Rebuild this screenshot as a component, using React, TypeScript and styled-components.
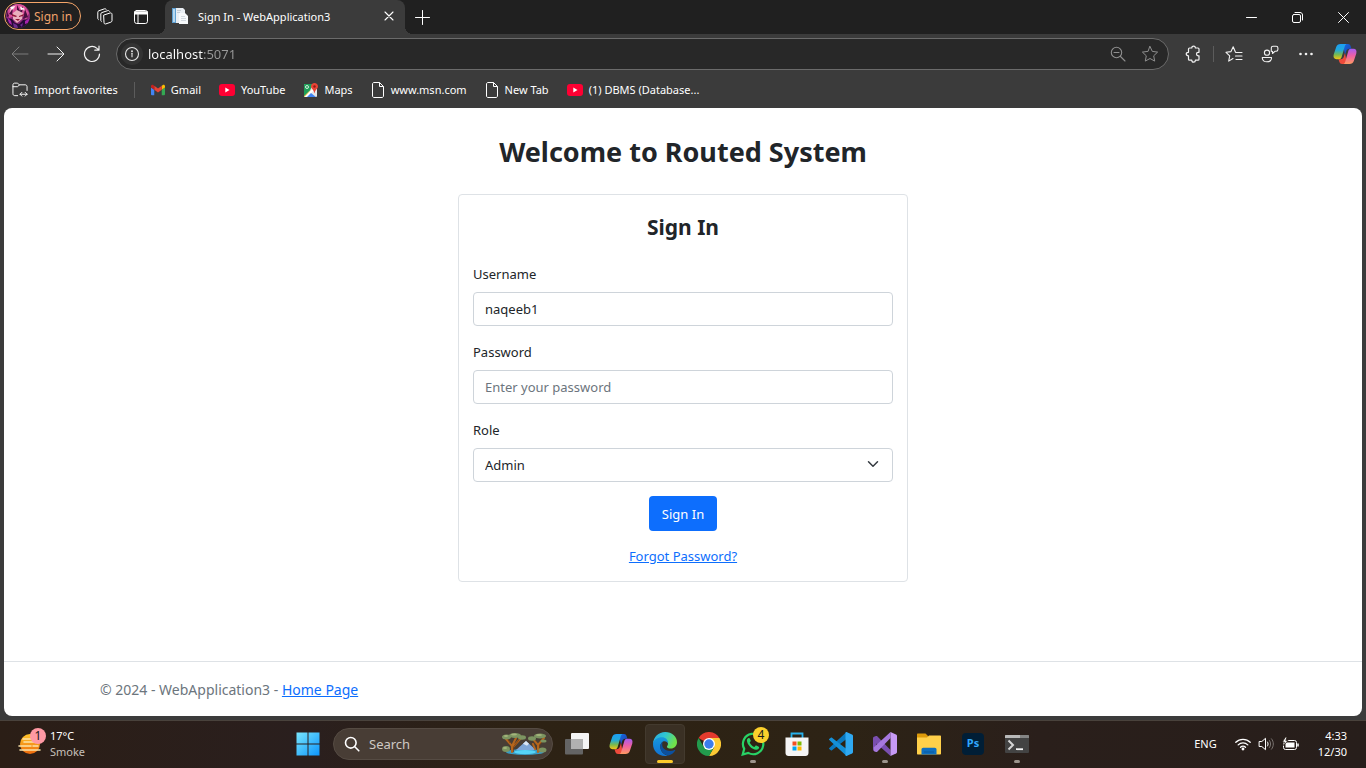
import React, { useId, useState } from "react";
import styled, { createGlobalStyle, css } from "styled-components";

const GlobalStyle = createGlobalStyle`
  *, *::before, *::after { box-sizing: border-box; }
  body { margin: 0; background: #3b3b3b; font-family: "Noto Sans", "Open Sans", sans-serif; }
  button, input, select { font-family: inherit; }
  svg { display: block; flex: none; }
`;

const Desktop = styled.div`
  display: flex;
  flex-direction: column;
  min-height: 100vh;
  background: #3b3b3b;
`;

/* ---------- Browser chrome ---------- */

const TitleBar = styled.header`
  display: flex;
  align-items: center;
  height: 34px;
  background: #202020;
  color: #fff;
`;

const PlainButton = styled.button<{ $w?: number; $h?: number; $dim?: boolean }>`
  display: flex;
  align-items: center;
  justify-content: center;
  flex: none;
  width: ${(p) => p.$w ?? 36}px;
  height: ${(p) => p.$h ?? 32}px;
  padding: 0;
  border: 0;
  background: none;
  color: ${(p) => (p.$dim ? "#7d7d7d" : "inherit")};
`;

const ProfileButton = styled.button`
  display: flex;
  align-items: center;
  gap: 4px;
  flex: none;
  width: 77px;
  height: 28px;
  margin: 0 6px 2px 4px;
  padding: 0 0 0 1px;
  border: 1px solid #f5a569;
  border-radius: 14px;
  background: none;
  color: #f0a26b;
  font-size: 12px;
  white-space: nowrap;
`;

const Tab = styled.div`
  position: relative;
  display: flex;
  align-items: center;
  width: 240px;
  height: 34px;
  margin-left: 6px;
  padding: 0 6px 2px 7px;
  border-radius: 8px 8px 0 0;
  background: #3b3b3b;
  font-size: 11px;

  &::before, &::after {
    content: "";
    position: absolute;
    bottom: 0;
    width: 8px;
    height: 8px;
  }
  &::before {
    right: 100%;
    background: radial-gradient(circle at 0 0, #202020 8px, #3b3b3b 8px);
  }
  &::after {
    left: 100%;
    background: radial-gradient(circle at 100% 0, #202020 8px, #3b3b3b 8px);
  }
`;

const TabTitle = styled.span`
  flex: 1;
  margin-left: 10px;
  white-space: nowrap;
`;

const WindowControls = styled.div`
  display: flex;
  margin-left: auto;
`;

const Toolbar = styled.div`
  display: flex;
  align-items: center;
  height: 40px;
  padding: 0 1px 0 2px;
  color: #f2f2f2;
`;

const AddressBar = styled.label`
  display: flex;
  align-items: center;
  flex: 1;
  height: 32px;
  margin: 0 6px;
  padding: 0 2px 0 4px;
  border: 1px solid #6b6b6b;
  border-radius: 16px;
  background: #282828;
  color: #8f8f8f;
`;

const SiteInfo = styled.span`
  display: flex;
  align-items: center;
  justify-content: center;
  width: 22px;
  height: 22px;
  border-radius: 11px;
  background: #333;
  color: #e8e8e8;
`;

const AddressInput = styled.input`
  flex: 1;
  min-width: 0;
  margin-left: 5px;
  padding: 0;
  border: 0;
  outline: 0;
  background: linear-gradient(90deg, #fff 56px, #9a9a9a 56px);
  background-clip: text;
  -webkit-background-clip: text;
  color: transparent;
  font-size: 13px;
  line-height: 20px;
`;

const Divider = styled.span<{ $gap: number }>`
  flex: none;
  width: 1px;
  height: 16px;
  margin: 0 ${(p) => p.$gap}px;
  background: #5c5c5c;
`;

const Bookmarks = styled.nav`
  display: flex;
  align-items: center;
  gap: 18px;
  height: 34px;
  padding: 0 12px 2px;
`;

const Bookmark = styled.a`
  display: flex;
  align-items: center;
  gap: 6px;
  color: #fff;
  font-size: 11px;
  line-height: 16px;
  text-decoration: none;
  white-space: nowrap;
`;

/* ---------- Web page ---------- */

const Page = styled.div`
  display: flex;
  flex: 1;
  flex-direction: column;
  margin: 0 4px 4px;
  border-radius: 8px;
  background: #fff;
  color: #212529;
  font-size: 13px;
  line-height: 22px;
`;

const Main = styled.main`
  display: flex;
  flex: 1;
  flex-direction: column;
  align-items: center;
  padding: 27px 14px;
`;

const Heading = styled.h1`
  margin: 0 0 25px;
  font-size: 27px;
  line-height: 34px;
  font-weight: 700;
`;

const Card = styled.form`
  display: flex;
  flex-direction: column;
  align-items: center;
  width: 100%;
  max-width: 450px;
  padding: 18px 14px 14px;
  border: 1px solid #dee2e6;
  border-radius: 4px;
`;

const CardTitle = styled.h2`
  margin: 0 0 22px;
  font-size: 21px;
  line-height: 28px;
  font-weight: 700;
`;

const Field = styled.div`
  display: flex;
  flex-direction: column;
  gap: 7px;
  width: 100%;
  margin-bottom: 15px;

  &:last-of-type { margin-bottom: 14px; }
`;

const control = css`
  width: 100%;
  height: 34px;
  padding: 0 11px;
  border: 1px solid #ced4da;
  border-radius: 4px;
  background: #fff;
  color: #212529;
  font-size: 13px;
  line-height: 22px;
`;

const TextInput = styled.input`
  ${control}
  &::placeholder { color: #6c757d; opacity: 1; }
`;

const SelectWrap = styled.div`
  position: relative;
  svg {
    position: absolute;
    top: 10px;
    right: 14px;
    pointer-events: none;
  }
`;

const RoleSelect = styled.select`
  ${control}
  appearance: none;
`;

const SubmitButton = styled.button`
  height: 35px;
  padding: 0 13px;
  border: 0;
  border-radius: 4px;
  background: #0d6efd;
  color: #fff;
  font-size: 13px;
`;

const PageLink = styled.a`
  color: #0d6efd;
  text-decoration: underline;
`;

const ForgotRow = styled.p`
  margin: 14px 0 0;
`;

const Footer = styled.footer`
  border-top: 1px solid #dee2e6;
  color: #6c757d;
  font-size: 14px;
`;

const FooterInner = styled.div`
  max-width: 1188px;
  margin: 0 auto;
  padding: 17px 11px 15px;
`;

/* ---------- Taskbar ---------- */

const Taskbar = styled.footer`
  display: flex;
  align-items: center;
  height: 48px;
  padding-bottom: 2px;
  border-top: 1px solid #49423c;
  background: linear-gradient(90deg, #2b1e16, #2a1f1e 22%, #2d2214 38%, #2d2315 62%, #2a1f1b 76%, #271e1b);
  color: #fff;
  font-size: 11px;
  line-height: 16px;
`;

const TaskLeft = styled.div`
  display: flex;
  align-items: center;
  flex: 1 1 285px;
  padding-left: 18px;
`;

const WeatherIcon = styled.span`
  position: relative;
  margin-right: 8px;
`;

const Badge = styled.span<{ $bg: string }>`
  position: absolute;
  top: -5px;
  right: -4px;
  width: 16px;
  height: 16px;
  border-radius: 8px;
  background: ${(p) => p.$bg};
  color: #1a1a1a;
  font-size: 12px;
  line-height: 16px;
  text-align: center;
`;

const Stack = styled.div<{ $right?: boolean }>`
  display: flex;
  flex-direction: column;
  text-align: ${(p) => (p.$right ? "right" : "left")};
`;

const Muted = styled.span`
  color: #c6c0bb;
`;

const TaskCenter = styled.div`
  display: flex;
  align-items: center;
  flex: none;
`;

const SearchBox = styled.label`
  display: flex;
  align-items: center;
  width: 220px;
  height: 32px;
  margin: 0 2px 0 3px;
  padding: 0 5px 0 10px;
  border: 1px solid #554b43;
  border-radius: 16px;
  background: #483d35;
`;

const SearchInput = styled.input`
  flex: 1;
  min-width: 0;
  margin-left: 9px;
  padding: 0;
  border: 0;
  outline: 0;
  background: none;
  color: #fff;
  font-size: 13px;
  &::placeholder { color: #cfc9c4; opacity: 1; }
`;

const AppButton = styled.button<{ $active?: boolean }>`
  position: relative;
  display: flex;
  align-items: center;
  justify-content: center;
  width: 40px;
  height: 40px;
  margin: 0 2px;
  padding: 0;
  border: 1px solid ${(p) => (p.$active ? "#433a2e" : "transparent")};
  border-radius: 4px;
  background: ${(p) => (p.$active ? "#3a3024" : "none")};
`;

const IconHolder = styled.span`
  position: relative;
`;

const Running = styled.span<{ $active?: boolean }>`
  position: absolute;
  bottom: 0;
  left: 50%;
  width: ${(p) => (p.$active ? 16 : 6)}px;
  height: 3px;
  border-radius: 2px;
  background: ${(p) => (p.$active ? "#fccb2b" : "#9c958d")};
  transform: translateX(-50%);
`;

const Tray = styled.div`
  display: flex;
  align-items: center;
  justify-content: flex-end;
  flex: 1 1 326px;
  padding-right: 19px;
`;

const TrayIcons = styled.div`
  display: flex;
  align-items: center;
  gap: 7px;
  margin: 0 19px 0 18px;
`;

const PhotoshopTile = styled.span`
  display: block;
  width: 22px;
  height: 22px;
  border-radius: 4px;
  background: #001e36;
  color: #31a8ff;
  font-size: 11px;
  font-weight: 700;
  line-height: 20px;
  text-align: center;
`;

/* ---------- Icons ---------- */

const Line = ({ size = 16, w = 1, children }: { size?: number; w?: number; children: React.ReactNode }) => (
  <svg width={size} height={size} viewBox={`0 0 ${size} ${size}`} fill="none" stroke="currentColor" strokeWidth={w} strokeLinecap="round" strokeLinejoin="round" aria-hidden="true">
    {children}
  </svg>
);

const Avatar = () => (
  <svg width="24" height="24" viewBox="0 0 24 24" aria-hidden="true">
    <defs><clipPath id="avatarClip"><circle cx="12" cy="12" r="12" /></clipPath></defs>
    <g clipPath="url(#avatarClip)">
      <path fill="#8c2a78" d="M0 0h24v24H0z" />
      <path fill="#d9509a" d="M2 6l6-6h10l5 9-3 7-6-8-5 4-6 2z" />
      <path fill="#f3a3c6" d="M4 5l6-4-2 4-4 4zM13 2l4 1 4 6-4-3z" />
      <path fill="#4a0f40" d="M3 10l4-6-1 7zM11 1l3 6 3-5-1 7-5-2zM19 5l3 8-5 2zM1 8l2 4-2 1z" />
      <path fill="#e9b0bf" d="M7 9l4-3 6 3-1 6-5 4-4-4z" />
      <path fill="#fff" d="M4 3l5-1-3 4zM14 3l5 2-4 1z" />
      <path fill="#8f1738" d="M6 10l5 2-1 1-4-1zM13 12l5-2-1 2-4 1zM9 15h5l-2 2z" />
      <path fill="#260b36" d="M0 14l6 1 3 4 4 1 4-4 7-1v9H0z" />
      <path fill="#a824ad" d="M1 13l4 4 1 4-3-2zM19 17l5-3-2 5-3 1z" />
      <path fill="#6d2b8e" d="M7 19l4 2 1 3H8zM14 21l3-2-1 4z" />
    </g>
  </svg>
);

const WorkspacesIcon = () => (
  <Line size={18}>
    <path d="M8 6.500l6-2c1-.3 2 .2 2 1.300v6.400c0 .7-.5 1.300-1.200 1.500l-5 1.700c-1 .4-1.800-.2-1.800-1.200z" transform="translate(0 .5)" />
    <path d="M5.300 13.500c-.3-.2-.5-.5-.5-1V6c0-.7.400-1.200 1-1.400l6-2c.7-.2 1.400 0 1.700.6" />
    <path d="M2.300 11.500c-.3-.2-.5-.5-.5-1V4.200c0-.7.400-1.200 1-1.400l5.700-2c.7-.2 1.400 0 1.700.6" />
  </Line>
);

const TabActionsIcon = () => (
  <Line size={16}>
    <rect x="1.500" y="1.500" width="13" height="13" rx="2.200" />
    <path d="M2 3.200h12M2 4.500h12" strokeWidth="2" />
    <path d="M5 5v9" />
  </Line>
);

const DocFavicon = () => (
  <svg width="16" height="16" viewBox="0 0 16 16" aria-hidden="true">
    <path fill="#5e9fd0" d="M0 0h4v15H0z" />
    <path fill="#b7d7ee" d="M1 1h2v13H1z" />
    <path fill="#e9eef3" d="M4 0h7l2 2v13H4z" />
    <path fill="#c4ccd4" d="M5 2h4v1H5zM5 4h3v1H5z" />
    <path fill="#f7f9fb" d="M7 5h6l3 3v8H7z" />
    <path fill="#d3dae1" d="M9 8h4v1H9zM9 10h5v1H9zM9 12h5v1H9z" />
  </svg>
);

const BackIcon = () => <Line size={18}><path d="M17 9H1.500M8 2L1 9l7 7" /></Line>;
const ForwardIcon = () => <Line size={18}><path d="M1 9h15.500M10 2l7 7-7 7" /></Line>;
const ReloadIcon = () => <Line size={18} w={1.2}><path d="M16.500 9a7.500 7.500 0 1 1-2.500-5.600L16 5M16 1v4.200h-4.200" /></Line>;
const InfoIcon = () => <Line size={16} w={1.1}><circle cx="8" cy="8" r="6.500" /><path d="M8 7.300v3.500" /><circle cx="8" cy="5.200" r=".4" fill="currentColor" /></Line>;
const ZoomOutIcon = () => <Line size={16} w={1.1}><circle cx="6.500" cy="6.500" r="5.200" /><path d="M4 6.500h5M10.500 10.500l4.500 4.500" /></Line>;

const starPath = "M9 1.500l2.300 4.900 5.300.7-3.900 3.700 1 5.300L9 13.500l-4.700 2.600 1-5.300L1.400 7.100l5.300-.7z";
const StarIcon = () => <Line size={18}><path d={starPath} /></Line>;
const FavoritesIcon = () => (
  <Line size={18} w={1.1}>
    <path d="M10.500 7.200L8.200 1.800 6 6.600l-5 .7 3.700 3.500-1 5.300 4.300-2.600M11 7.500h6M10.500 11h6.500M11 14.500h6" />
  </Line>
);
const PuzzleIcon = () => (
  <Line size={18} w={1.2}>
    <path d="M4.500 4c0-.6.400-1 1-1h2.300c0-2.600 3.600-2.600 3.600 0H14c.6 0 1 .4 1 1v3.300h-.8c-2.300 0-2.300 3.500 0 3.500h.8v3.400c0 .6-.4 1-1 1h-2.600c0 2.600-3.600 2.600-3.600 0H5.500c-.6 0-1-.4-1-1v-3.400c-3 0-3-3.500 0-3.500z" />
  </Line>
);
const FeedbackIcon = () => (
  <Line size={18} w={1.1}>
    <circle cx="6" cy="7.700" r="2.600" />
    <path d="M1.300 12.500h9.200v.6c0 2.300-2 3.700-4.600 3.700s-4.600-1.400-4.600-3.700zM10.300 6.500V3c0-1 .7-1.700 1.700-1.700h3.200c1 0 1.700.7 1.700 1.700v1.500c0 1-.7 1.700-1.700 1.700h-1l-2.700 2.300v-2.300" />
  </Line>
);
const DotsIcon = () => (
  <svg width="16" height="16" viewBox="0 0 16 16" fill="currentColor" aria-hidden="true">
    <circle cx="2.500" cy="8" r="1.300" /><circle cx="8" cy="8" r="1.300" /><circle cx="13.500" cy="8" r="1.300" />
  </svg>
);

const CopilotIcon = () => {
  const id = useId();
  return (
    <svg width="24" height="24" viewBox="0 0 24 24" aria-hidden="true">
      <defs>
        <linearGradient id={id + "a"} x1="0" y1="0" x2="0" y2="1">
          <stop offset="0" stopColor="#1c9ef5" /><stop offset=".4" stopColor="#22a9d8" /><stop offset=".7" stopColor="#79b94f" /><stop offset="1" stopColor="#f4c413" />
        </linearGradient>
        <linearGradient id={id + "b"} x1="0" y1="0" x2="0" y2="1">
          <stop offset="0" stopColor="#a65cf0" /><stop offset=".45" stopColor="#ec5fa5" /><stop offset="1" stopColor="#ff9a62" />
        </linearGradient>
        <linearGradient id={id + "c"} x1="0" y1="0" x2="1" y2="1">
          <stop offset="0" stopColor="#1769e0" /><stop offset="1" stopColor="#1b3fae" />
        </linearGradient>
      </defs>
      <path fill={`url(#${id}c)`} d="M10 2h5c1.400 0 2.200.8 2.600 2l.8 2.800h-2.200c-1.600 0-2.600 1-3 2.400L12 13z" />
      <path fill="#ee4a3b" d="M14 22H9c-1.400 0-2.200-.8-2.600-2l-.9-2.800h2.300c1.600 0 2.600-1 3-2.400L12 11z" />
      <path fill={`url(#${id}a)`} d="M7.600 2h6.200c-1.200.3-1.700 1.300-2 2.300L8.600 15.200c-.4 1.300-1.200 2-2.600 2H3.600C1 17.200 0 15.200.7 12.600L3.200 5C3.800 3 5.300 2 7.600 2z" />
      <path fill={`url(#${id}b)`} d="M16.400 22h-6.200c1.200-.3 1.700-1.300 2-2.300l3.200-10.900c.4-1.300 1.200-2 2.600-2h2.400c2.600 0 3.600 2 2.900 4.600L20.800 19c-.6 2-2.100 3-4.400 3z" />
    </svg>
  );
};

const ImportIcon = () => (
  <svg width="16" height="16" viewBox="0 0 17 17" fill="none" stroke="#fff" strokeLinecap="round" strokeLinejoin="round" aria-hidden="true">
    <path d="M6 14.500H3c-1.200 0-2-.8-2-2V3c0-1 .8-1.800 1.800-1.800h2.400c.5 0 1 .2 1.300.6L7.800 3H14c1.200 0 2 .8 2 2v4M1 5h4.500c.5 0 1-.2 1.300-.6L7.800 3M10.500 11L8.500 13l2 2M14 11l2 2-2 2M8.700 13H16" />
  </svg>
);
const GmailIcon = () => (
  <svg width="14" height="12" viewBox="0 0 15 12" aria-hidden="true">
    <path fill="#4285f4" d="M1 11.500h2.500V5.800L0 3.200v7.300c0 .6.400 1 1 1z" />
    <path fill="#34a853" d="M11.500 11.500H14c.6 0 1-.4 1-1V3.200l-3.500 2.600z" />
    <path fill="#fbbc04" d="M11.500 1.500v4.300L15 3.200V2c0-1.500-1.600-2-2.600-1.200z" />
    <path fill="#ea4335" d="M3.500 5.800V1.500l4 3 4-3v4.300l-4 3z" />
    <path fill="#c5221f" d="M0 2v1.200l3.500 2.600V1.500l-.9-.7C1.600 0 0 .5 0 2z" />
  </svg>
);
const YouTubeIcon = () => (
  <svg width="16" height="12" viewBox="0 0 16 12" aria-hidden="true">
    <rect width="16" height="12" rx="3" fill="#f03" /><path d="M6.300 3.500v5l4.200-2.500z" fill="#fff" />
  </svg>
);
const MapsIcon = () => (
  <svg width="15" height="15" viewBox="0 0 15 15" aria-hidden="true">
    <rect x="1" y="1" width="13" height="13" rx="1" fill="#e6e8ea" />
    <path fill="#1e9e58" d="M1 2c0-.6.400-1 1-1h8L7 7.500 1 13.500z" />
    <path fill="#fcc934" d="M8.500 6L1 13.300 2 14z" /><path fill="#fff" d="M10 5.500L1.500 14h2.800l6.500-6.600z" />
    <path fill="#4285f4" d="M4 14l4-4 5 4z" />
    <circle cx="4" cy="4" r="1.500" fill="none" stroke="#fff" strokeWidth=".8" />
    <path fill="#ea4335" d="M11.500 0C9.600 0 8 1.500 8 3.500c0 2.200 2.700 3 3.300 6.500.1.300.3.300.4 0C12.300 6.500 15 5.700 15 3.500 15 1.500 13.400 0 11.500 0z" />
    <circle cx="11.500" cy="3.500" r="1.200" fill="#8c1f1a" />
  </svg>
);
const FileIcon = () => (
  <svg width="14" height="16" viewBox="0 0 14 16" fill="none" stroke="#fff" strokeLinejoin="round" aria-hidden="true">
    <path d="M3 .5h5.500l4 4v9.500c0 .8-.7 1.500-1.500 1.500H3c-.8 0-1.500-.7-1.500-1.500V2C1.500 1.200 2.200.5 3 .5zM8.500.5v4h4" />
  </svg>
);

const SmokeIcon = () => (
  <svg width="24" height="22" viewBox="0 0 24 22" aria-hidden="true">
    <defs><linearGradient id="sun" x1="0" y1="0" x2="0" y2="1"><stop offset="0" stopColor="#ffc62a" /><stop offset="1" stopColor="#ee6a0c" /></linearGradient></defs>
    <circle cx="12" cy="11" r="10" fill="url(#sun)" />
    <path d="M5 6h9M6 9h17M1 13h12M15 13h5M2 17h20" stroke="#fbe2a8" strokeWidth="1.600" strokeLinecap="round" />
  </svg>
);
const StartIcon = () => (
  <svg width="24" height="24" viewBox="0 0 24 24" aria-hidden="true">
    <defs><linearGradient id="start" x1="0" y1="0" x2="24" y2="24" gradientUnits="userSpaceOnUse"><stop offset="0" stopColor="#7be8fd" /><stop offset="1" stopColor="#0a93fb" /></linearGradient></defs>
    <path fill="url(#start)" d="M.5.500h11v11H.5zM12.500.5h11v11h-11zM.5 12.500h11v11H.5zM12.500 12.500h11v11h-11z" />
  </svg>
);
const SearchArt = () => (
  <svg width="46" height="24" viewBox="0 0 46 24" aria-hidden="true">
    <ellipse cx="24" cy="20" rx="19" ry="3" fill="#3a9cc4" />
    <path fill="#7fa6d8" d="M15 18l10-9 10 9z" /><path fill="#dbe6f5" d="M22 11.700L25 9l3 2.700-2 2-2-1z" />
    <path fill="none" stroke="#b5651d" strokeWidth="2" strokeLinecap="round" d="M11 20v-6L5 7M11 14l4-8M12 15l8-9M37 20v-7l-5-6M37 13l6-7M34 17l-2-5" />
    <path fill="none" stroke="#7d3f10" strokeWidth=".8" d="M12.500 20v-5l6-8M38.500 20v-7l4-5M9 11L7 7" />
    <g fill="#7c9461"><ellipse cx="5.500" cy="5" rx="4.500" ry="2.500" /><ellipse cx="14" cy="3.500" rx="6" ry="2.500" /><ellipse cx="21" cy="5.500" rx="4" ry="2.200" /><ellipse cx="31" cy="6.500" rx="4" ry="2.200" /><ellipse cx="39" cy="4" rx="6" ry="2.500" /><ellipse cx="42.500" cy="9" rx="3" ry="1.600" /><ellipse cx="5" cy="17" rx="4" ry="3" /><ellipse cx="41.500" cy="18" rx="4" ry="2.500" /></g>
    <g fill="#a5b57c"><ellipse cx="13" cy="2.500" rx="3" ry="1" /><ellipse cx="38" cy="3" rx="3" ry="1" /><ellipse cx="5" cy="4" rx="2" ry="1" /><ellipse cx="4" cy="16" rx="2" ry="1" /></g>
    <ellipse cx="24" cy="20" rx="11" ry="2" fill="#56d4f7" />
  </svg>
);
const TaskViewIcon = () => (
  <svg width="24" height="24" viewBox="0 0 24 24" aria-hidden="true">
    <rect y="7" width="18" height="15.500" rx="1" fill="#646464" /><rect x="6" y="1" width="18" height="16" rx="1" fill="#f4f4f4" /><path fill="#b0b0b0" d="M6 7h12v10H6z" />
  </svg>
);
const EdgeIcon = () => (
  <svg width="24" height="24" viewBox="0 0 24 24" aria-hidden="true">
    <defs>
      <linearGradient id="edgeTop" x1="0" y1="0" x2="1" y2=".4"><stop offset="0" stopColor="#2aa6e0" /><stop offset=".5" stopColor="#2fc6d3" /><stop offset="1" stopColor="#70e24a" /></linearGradient>
      <linearGradient id="edgeBody" x1="0" y1="0" x2="0" y2="1"><stop offset="0" stopColor="#1797dd" /><stop offset="1" stopColor="#1172d3" /></linearGradient>
    </defs>
    <path fill="url(#edgeTop)" d="M0 11.500C.5 5 5.500 0 12.200 0 19 0 24 4.500 24 10.200c0 3.600-2.700 6.300-6.200 6.300-2.400 0-3.900-.8-3.900-1.800 0-.8 1.100-1.200 1.100-3 0-2.400-2.300-4.500-5.500-4.500C5 7.200 1.200 9 0 11.500z" />
    <path fill="url(#edgeBody)" d="M0 11.800C.6 7.500 4.800 5.300 9 5.300c3.400 0 6.500 2.700 6 6.500-.3-1.500-1.800-2.500-3.500-2.500-2 0-4.200 2-4.200 5.300 0 4.500 3.200 8.300 7.600 9.100-1 .2-1.900.3-2.900.3C5 24 0 18.700 0 12z" />
    <path fill="#0b509f" d="M9.800 9.700C8 10.800 7.300 12.800 7.300 14.600c0 4.600 3.700 8.700 8.200 8.900 2.800-.7 5.200-2.500 6.700-5 .3-.5-.1-.7-.5-.5-5.200 2.500-12.300.3-12.500-5.200 0-1.200.2-2.300.6-3.100z" />
  </svg>
);
const ChromeIcon = () => (
  <svg width="24" height="24" viewBox="0 0 24 24" aria-hidden="true">
    <path fill="#e33b2e" d="M12 12L1.600 6a12 12 0 0 1 20.800 0z" /><path fill="#fcc934" d="M12 6h10.400A12 12 0 0 1 12 24l5.200-9z" /><path fill="#229a4c" d="M1.600 6A12 12 0 0 0 12 24l5.200-9H6.800z" />
    <circle cx="12" cy="12" r="6" fill="#fff" /><circle cx="12" cy="12" r="4.700" fill="#3b7ded" />
  </svg>
);
const WhatsAppIcon = () => (
  <svg width="24" height="24" viewBox="0 0 24 24" aria-hidden="true">
    <path fill="none" stroke="#28d366" strokeWidth="2.200" d="M1.700 22.500l1.500-5.600a10.200 10.200 0 1 1 4 4z" />
    <path fill="#28d366" d="M8.700 6.500c-.3-.6-.8-.6-1.200-.5-1 .4-1.700 1.500-1.600 2.800.4 4.200 5 8.700 9.200 9 1.500.1 2.700-.7 3-2 .1-.5 0-.8-.4-1l-2.300-1.200c-.4-.2-.7-.1-1 .2l-.9 1.200c-2-.7-3.900-2.400-4.800-4.600l.9-1.100c.2-.3.200-.6.100-.9z" />
  </svg>
);
const StoreIcon = () => (
  <svg width="24" height="24" viewBox="0 0 24 24" aria-hidden="true">
    <path fill="none" stroke="#27b1ec" strokeWidth="1.800" d="M6.500 6V1.500h11V6" />
    <path fill="#f5f5f5" d="M.5 5.500h23V21c0 1.700-1.300 3-3 3h-17c-1.700 0-3-1.300-3-3z" />
    <path fill="#f25022" d="M7.500 9.500h4v4h-4z" /><path fill="#7fba00" d="M12.500 9.500h4v4h-4z" /><path fill="#00a4ef" d="M7.500 14.500h4v4h-4z" /><path fill="#ffb900" d="M12.500 14.500h4v4h-4z" />
  </svg>
);
const VSCodeIcon = () => (
  <svg width="24" height="24" viewBox="0 0 24 24" aria-hidden="true">
    <path fill="#0a78be" d="M0 16.300L17.500 0v7L3 18.200c-.4.300-.8.300-1.200 0L.2 17c-.3-.2-.3-.5-.2-.7z" />
    <path fill="#1590d8" d="M0 7.700L17.500 24v-7L3 5.800c-.4-.3-.8-.3-1.200 0L.2 7c-.3.200-.3.500-.2.700z" />
    <path fill="#2fa9f2" d="M17.500 0L23 2.500c.6.300 1 .8 1 1.500v16c0 .7-.4 1.200-1 1.500L17.500 24c-.7 0-1-.4-1-1V1c0-.6.300-1 1-1z" />
  </svg>
);
const VisualStudioIcon = () => (
  <svg width="24" height="24" viewBox="0 0 24 24" aria-hidden="true">
    <path fill="#7a4fb0" d="M0 6.200c0-.6.400-1.100 1-1.400L3 4c.4-.2.700-.1 1 .1L17.500 18v6L3.500 11.500v1L1 19c-.6-.2-1-.7-1-1.400z" />
    <path fill="#a678de" d="M1 19.200l2 .8c.4.200.7.100 1-.1L17.500 6V0L.6 15.500z" />
    <path fill="#c79af5" d="M17.500 0L23 2.500c.6.300 1 .8 1 1.500v16c0 .7-.4 1.200-1 1.500L17.500 24z" />
  </svg>
);
const FolderIcon = () => (
  <svg width="24" height="24" viewBox="0 0 24 24" aria-hidden="true">
    <path fill="#dd9a0a" d="M0 2.500c0-.6.400-1 1-1h7.500L11 4v3H0z" /><path fill="#ffd04a" d="M0 5.500h10l2-2h11c.6 0 1 .4 1 1v17c0 .6-.4 1-1 1H1c-.6 0-1-.4-1-1z" />
    <path fill="#0f6fc0" d="M4.500 17.500c0-1 .7-1.700 1.700-1.700h11.600c1 0 1.700.7 1.700 1.700v5h-15z" /><path fill="#0a5a9f" d="M7 19.500h10v1H7z" />
  </svg>
);
const TerminalIcon = () => (
  <svg width="24" height="20" viewBox="0 0 24 20" aria-hidden="true">
    <rect y="1" width="24" height="18" rx="1" fill="#434343" /><path fill="#b9b9b9" d="M0 2c0-.6.400-1 1-1h14v3H0z" /><path fill="#858585" d="M15 1h8c.6 0 1 .4 1 1v2h-9z" />
    <path d="M3.500 6.500L8 11l-4.500 4.500" fill="none" stroke="#d5d5d5" strokeWidth="2" /><path d="M11 15.200h7" stroke="#f4f4f4" strokeWidth="1.800" />
  </svg>
);
const WifiIcon = () => (
  <svg width="16" height="14" viewBox="0 0 16 14" fill="none" stroke="#fff" strokeWidth="1.300" strokeLinecap="round" aria-hidden="true">
    <path d="M.8 5.300a10.200 10.200 0 0 1 14.400 0M3.200 7.900a6.800 6.800 0 0 1 9.600 0M5.500 10.300a3.600 3.600 0 0 1 5 0" /><circle cx="8" cy="12" r=".8" fill="#fff" />
  </svg>
);
const SpeakerIcon = () => (
  <svg width="17" height="16" viewBox="0 0 17 16" fill="none" stroke="#fff" strokeLinecap="round" strokeLinejoin="round" aria-hidden="true">
    <path d="M1.500 5.500h2.300L7.500 2.300v11.400l-3.700-3.200H1.500zM9.500 6c.8 1.200.8 2.800 0 4" /><path stroke="#7b7572" d="M11.500 4.500c1.500 2 1.500 5 0 7M13.500 2.800c2.500 3 2.500 7.400 0 10.400" />
  </svg>
);
const BatteryIcon = () => (
  <svg width="17" height="14" viewBox="0 0 17 14" aria-hidden="true">
    <rect x="1.500" y="3.500" width="13" height="9" rx="2" fill="none" stroke="#fff" /><rect x="3.500" y="5.500" width="9" height="5" fill="#fff" /><path stroke="#fff" strokeWidth="1.500" d="M16 6.500v3" />
    <path fill="#fff" stroke="#292019" strokeWidth=".8" d="M3.500 0L.3 5h2L1.500 8.500 6 3.500H3.800L5 0z" />
  </svg>
);

/* ---------- App ---------- */

const bookmarks = [
  { label: "Gmail", icon: <GmailIcon /> },
  { label: "YouTube", icon: <YouTubeIcon /> },
  { label: "Maps", icon: <MapsIcon /> },
  { label: "www.msn.com", icon: <FileIcon /> },
  { label: "New Tab", icon: <FileIcon /> },
  { label: "(1) DBMS (Database...", icon: <YouTubeIcon /> },
];

const apps: { name: string; icon: React.ReactNode; running?: boolean; active?: boolean; badge?: string }[] = [
  { name: "Task View", icon: <TaskViewIcon /> },
  { name: "Copilot", icon: <CopilotIcon /> },
  { name: "Edge", icon: <EdgeIcon />, running: true, active: true },
  { name: "Chrome", icon: <ChromeIcon /> },
  { name: "WhatsApp", icon: <WhatsAppIcon />, running: true, badge: "4" },
  { name: "Store", icon: <StoreIcon /> },
  { name: "VS Code", icon: <VSCodeIcon /> },
  { name: "Visual Studio", icon: <VisualStudioIcon />, running: true },
  { name: "File Explorer", icon: <FolderIcon /> },
  { name: "Photoshop", icon: <PhotoshopTile>Ps</PhotoshopTile> },
  { name: "Terminal", icon: <TerminalIcon />, running: true },
];

export default function App() {
  const [username, setUsername] = useState("naqeeb1");
  const [password, setPassword] = useState("");
  const [role, setRole] = useState("Admin");

  return (
    <Desktop>
      <GlobalStyle />
      <TitleBar>
        <ProfileButton><Avatar />Sign in</ProfileButton>
        <PlainButton aria-label="Workspaces"><WorkspacesIcon /></PlainButton>
        <PlainButton aria-label="Tab actions"><TabActionsIcon /></PlainButton>
        <Tab>
          <DocFavicon />
          <TabTitle>Sign In - WebApplication3</TabTitle>
          <PlainButton $w={20} $h={20} aria-label="Close tab"><Line size={10} w={1.1}><path d="M1 1l8 8M9 1L1 9" /></Line></PlainButton>
        </Tab>
        <PlainButton $w={34} aria-label="New tab"><Line size={15}><path d="M7.500.5v14M.5 7.500h14" /></Line></PlainButton>
        <WindowControls>
          <PlainButton $w={46} aria-label="Minimize"><Line size={11}><path d="M.5 5.500h10" /></Line></PlainButton>
          <PlainButton $w={46} aria-label="Restore"><Line size={11}><rect x=".5" y="2.500" width="8" height="8" rx="1.500" /><path d="M3 .5h5c1.500 0 2.500 1 2.500 2.500v5" /></Line></PlainButton>
          <PlainButton $w={46} aria-label="Close"><Line size={11}><path d="M.5.500l10 10M10.500.5l-10 10" /></Line></PlainButton>
        </WindowControls>
      </TitleBar>

      <Toolbar>
        <PlainButton $dim aria-label="Back"><BackIcon /></PlainButton>
        <PlainButton aria-label="Forward"><ForwardIcon /></PlainButton>
        <PlainButton aria-label="Refresh"><ReloadIcon /></PlainButton>
        <AddressBar>
          <SiteInfo><InfoIcon /></SiteInfo>
          <AddressInput aria-label="Address" defaultValue="localhost:5071" />
          <PlainButton $w={32} $h={28} aria-label="Zoom"><ZoomOutIcon /></PlainButton>
          <PlainButton $w={32} $h={28} aria-label="Add to favorites"><StarIcon /></PlainButton>
        </AddressBar>
        <PlainButton aria-label="Extensions"><PuzzleIcon /></PlainButton>
        <Divider $gap={2} />
        <PlainButton aria-label="Favorites"><FavoritesIcon /></PlainButton>
        <PlainButton aria-label="Send feedback"><FeedbackIcon /></PlainButton>
        <PlainButton aria-label="Settings and more"><DotsIcon /></PlainButton>
        <PlainButton $w={41} aria-label="Copilot"><CopilotIcon /></PlainButton>
      </Toolbar>

      <Bookmarks>
        <Bookmark href="#"><ImportIcon />Import favorites</Bookmark>
        <Divider $gap={-2} />
        {bookmarks.map((b) => (
          <Bookmark href="#" key={b.label}>{b.icon}{b.label}</Bookmark>
        ))}
      </Bookmarks>

      <Page>
        <Main>
          <Heading>Welcome to Routed System</Heading>
          <Card onSubmit={(e) => e.preventDefault()}>
            <CardTitle>Sign In</CardTitle>
            <Field>
              <label htmlFor="username">Username</label>
              <TextInput id="username" value={username} onChange={(e) => setUsername(e.target.value)} />
            </Field>
            <Field>
              <label htmlFor="password">Password</label>
              <TextInput id="password" type="password" placeholder="Enter your password" value={password} onChange={(e) => setPassword(e.target.value)} />
            </Field>
            <Field>
              <label htmlFor="role">Role</label>
              <SelectWrap>
                <RoleSelect id="role" value={role} onChange={(e) => setRole(e.target.value)}>
                  <option>Admin</option>
                </RoleSelect>
                <svg width="12" height="12" viewBox="0 0 16 16" fill="none" stroke="#343a40" strokeWidth="2" strokeLinecap="round" strokeLinejoin="round" aria-hidden="true"><path d="M2 5l6 6 6-6" /></svg>
              </SelectWrap>
            </Field>
            <SubmitButton type="submit">Sign In</SubmitButton>
            <ForgotRow><PageLink href="#">Forgot Password?</PageLink></ForgotRow>
          </Card>
        </Main>
        <Footer>
          <FooterInner>© 2024 - WebApplication3 - <PageLink href="#">Home Page</PageLink></FooterInner>
        </Footer>
      </Page>

      <Taskbar>
        <TaskLeft>
          <WeatherIcon><SmokeIcon /><Badge $bg="#ff99a4">1</Badge></WeatherIcon>
          <Stack><span>17°C</span><Muted>Smoke</Muted></Stack>
        </TaskLeft>
        <TaskCenter>
          <AppButton aria-label="Start"><StartIcon /></AppButton>
          <SearchBox>
            <Line size={16} w={1.6}><circle cx="6.800" cy="6.800" r="5.300" /><path d="M10.800 10.800l4 4" /></Line>
            <SearchInput aria-label="Search" placeholder="Search" />
            <SearchArt />
          </SearchBox>
          {apps.map((a) => (
            <AppButton key={a.name} $active={a.active} aria-label={a.name}>
              <IconHolder>{a.icon}{a.badge && <Badge $bg="#fcd02b">{a.badge}</Badge>}</IconHolder>
              {a.running && <Running $active={a.active} />}
            </AppButton>
          ))}
        </TaskCenter>
        <Tray>
          <span>ENG</span>
          <TrayIcons><WifiIcon /><SpeakerIcon /><BatteryIcon /></TrayIcons>
          <Stack $right><span>4:33</span><span>12/30</span></Stack>
        </Tray>
      </Taskbar>
    </Desktop>
  );
}
